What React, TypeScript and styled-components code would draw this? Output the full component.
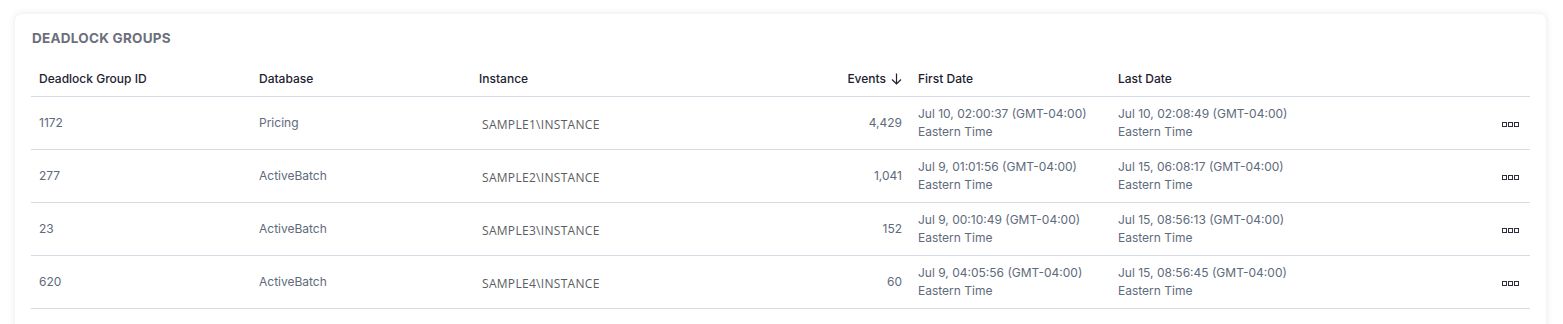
import { ReactElement } from 'react';
import styled, { createGlobalStyle } from 'styled-components';

const GlobalStyle = createGlobalStyle`
  html, body {
    margin: 0;
    padding: 0;
    background: #ffffff;
  }
  body {
    font-family: Inter, 'Noto Sans', sans-serif;
  }
`;

type DeadlockRow = {
  id: string;
  database: string;
  instance: string;
  events: string;
  firstDate: string;
  lastDate: string;
};

const ROWS: DeadlockRow[] = [
  {
    id: '1172',
    database: 'Pricing',
    instance: 'SAMPLE1\\INSTANCE',
    events: '4,429',
    firstDate: 'Jul 10, 02:00:37 (GMT-04:00)',
    lastDate: 'Jul 10, 02:08:49 (GMT-04:00)',
  },
  {
    id: '277',
    database: 'ActiveBatch',
    instance: 'SAMPLE2\\INSTANCE',
    events: '1,041',
    firstDate: 'Jul 9, 01:01:56 (GMT-04:00)',
    lastDate: 'Jul 15, 06:08:17 (GMT-04:00)',
  },
  {
    id: '23',
    database: 'ActiveBatch',
    instance: 'SAMPLE3\\INSTANCE',
    events: '152',
    firstDate: 'Jul 9, 00:10:49 (GMT-04:00)',
    lastDate: 'Jul 15, 08:56:13 (GMT-04:00)',
  },
  {
    id: '620',
    database: 'ActiveBatch',
    instance: 'SAMPLE4\\INSTANCE',
    events: '60',
    firstDate: 'Jul 9, 04:05:56 (GMT-04:00)',
    lastDate: 'Jul 15, 08:56:45 (GMT-04:00)',
  },
];

const Page = styled.div`
  padding: 14px 17px 0 15px;
`;

const Card = styled.section`
  width: 1531px;
  box-sizing: border-box;
  background: #ffffff;
  border-radius: 7px;
  box-shadow: 0 0 6px 1px rgba(60, 70, 100, 0.1);
  padding: 16px 16px 40px 16px;
`;

const Title = styled.h2`
  margin: 0 0 0 1px;
  font-size: 13.5px;
  line-height: 16px;
  font-weight: 700;
  color: #6b6f7b;
  letter-spacing: 0.25px;
`;

const Table = styled.table`
  width: 1499px;
  margin-top: 14px;
  border-collapse: collapse;
  table-layout: fixed;
`;

const HeadCell = styled.th<{ $align?: 'left' | 'right' }>`
  height: 36px;
  padding: 0 8px;
  text-align: ${({ $align }) => $align ?? 'left'};
  font-size: 12px;
  font-weight: 500;
  color: #1d2230;
  border-bottom: 1px solid #d6dae4;
  white-space: nowrap;
`;

const SortArrow = styled.svg`
  margin-left: 5px;
  vertical-align: -2px;
`;

const Row = styled.tr`
  height: 53px;
  border-bottom: 1px solid #d6dae4;
`;

const Cell = styled.td<{ $align?: 'left' | 'right' }>`
  padding: 0 8px;
  text-align: ${({ $align }) => $align ?? 'left'};
  font-size: 12px;
  line-height: 18px;
  color: #606a7b;
  white-space: nowrap;
  vertical-align: middle;
`;

const InstanceCell = styled(Cell)`
  padding-left: 11px;
  padding-top: 3px;
  font-family: 'Open Sans', 'Noto Sans', sans-serif;
  letter-spacing: 0.3px;
  color: #5a5d63;
`;

const ActionCell = styled(Cell)`
  text-align: right;
  padding-right: 11px;
`;

const MoreButton = styled.button`
  border: 0;
  background: none;
  padding: 0;
  display: inline-flex;
  cursor: pointer;
`;

const DateLines = styled.div`
  display: flex;
  flex-direction: column;
  margin-top: -1px;
`;

const MoreIcon = (): ReactElement => (
  <svg width={17} height={5} viewBox={'0 0 17 5'} fill={'none'}>
    <rect x={0.5} y={0.5} width={4} height={4} stroke={'#2e3038'} strokeWidth={1} />
    <rect x={6.5} y={0.5} width={4} height={4} stroke={'#2e3038'} strokeWidth={1} />
    <rect x={12.5} y={0.5} width={4} height={4} stroke={'#2e3038'} strokeWidth={1} />
  </svg>
);

const DateCell = ({ value }: { value: string }): ReactElement => (
  <Cell>
    <DateLines>
      <span>{value}</span>
      <span>Eastern Time</span>
    </DateLines>
  </Cell>
);

const App = (): ReactElement => (
  <Page>
    <GlobalStyle />
    <Card>
      <Title>DEADLOCK GROUPS</Title>
      <Table>
        <colgroup>
          <col style={{ width: 220 }} />
          <col style={{ width: 220 }} />
          <col style={{ width: 220 }} />
          <col style={{ width: 219 }} />
          <col style={{ width: 200 }} />
          <col style={{ width: 220 }} />
          <col />
        </colgroup>
        <thead>
          <tr>
            <HeadCell>Deadlock Group ID</HeadCell>
            <HeadCell>Database</HeadCell>
            <HeadCell>Instance</HeadCell>
            <HeadCell $align={'right'}>
              Events
              <SortArrow width={11} height={12} viewBox={'0 0 11 12'} fill={'none'}>
                <path
                  d={'M5.5 0.5V11M1 6.5L5.5 11L10 6.5'}
                  stroke={'#1d2230'}
                  strokeWidth={1.2}
                />
              </SortArrow>
            </HeadCell>
            <HeadCell>First Date</HeadCell>
            <HeadCell>Last Date</HeadCell>
            <HeadCell />
          </tr>
        </thead>
        <tbody>
          {ROWS.map((row) => (
            <Row key={row.id}>
              <Cell>{row.id}</Cell>
              <Cell>{row.database}</Cell>
              <InstanceCell>{row.instance}</InstanceCell>
              <Cell $align={'right'}>{row.events}</Cell>
              <DateCell value={row.firstDate} />
              <DateCell value={row.lastDate} />
              <ActionCell>
                <MoreButton aria-label={'More actions'}>
                  <MoreIcon />
                </MoreButton>
              </ActionCell>
            </Row>
          ))}
        </tbody>
      </Table>
    </Card>
  </Page>
);

export default App;
